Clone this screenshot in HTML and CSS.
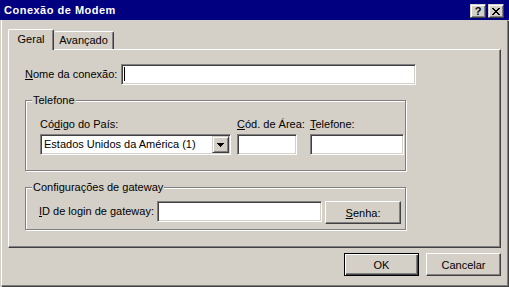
FILE: index.html
```html
<!DOCTYPE html>
<html lang="pt-BR">
<head>
<meta charset="UTF-8">
<title>Conexão de Modem</title>
<link rel="stylesheet" href="styles.css">
</head>
<body>
<div class="titlebar">
  <span class="title">Conexão de Modem</span>
  <div class="caption-btns">
    <span class="cap-btn help">?</span>
    <span class="cap-btn close">
      <svg width="8" height="7" viewBox="0 0 8 7"><path d="M0 0h2v1H0zM6 0h2v1H6zM1 1h2v1H1zM5 1h2v1H5zM2 2h4v1H2zM3 3h2v1H3zM2 4h4v1H2zM1 5h2v1H1zM5 5h2v1H5zM0 6h2v1H0zM6 6h2v1H6z" fill="#000"/></svg>
    </span>
  </div>
</div>
<div class="frame">
  <div class="tabs">
    <div class="tab active">Geral</div>
    <div class="tab">Avançado</div>
  </div>
  <div class="panel">
    <div class="name-row">
      <label class="name-label"><u>N</u>ome da conexão:</label>
      <div class="edit name-edit"><span class="caret"></span></div>
    </div>

    <fieldset class="group phone-group">
      <legend>Telefone</legend>
      <div class="phone-cols">
        <div class="col">
          <label>Có<u>d</u>igo do País:</label>
          <div class="combo country">
            <span class="combo-text">Estados Unidos da América (1)</span>
            <span class="combo-btn">
              <svg width="7" height="4" viewBox="0 0 7 4"><path d="M0 0h7v1H0zM1 1h5v1H1zM2 2h3v1H2zM3 3h1v1H3z" fill="#000"/></svg>
            </span>
          </div>
        </div>
        <div class="col">
          <label><u>C</u>ód. de Área:</label>
          <div class="edit area-edit"></div>
        </div>
        <div class="col">
          <label><u>T</u>elefone:</label>
          <div class="edit phone-edit"></div>
        </div>
      </div>
    </fieldset>

    <fieldset class="group gateway-group">
      <legend>Configurações de gateway</legend>
      <div class="gateway-row">
        <label class="gateway-label"><u>I</u>D de login de gateway:</label>
        <div class="edit gateway-edit"></div>
        <button class="btn senha"><u>S</u>enha:</button>
      </div>
    </fieldset>
  </div>
  <div class="actions">
    <button class="btn default">OK</button>
    <button class="btn">Cancelar</button>
  </div>
</div>
</body>
</html>
```

FILE: styles.css
```css
  body {
    margin: 0;
    width: 509px;
    height: 287px;
    overflow: hidden;
    background-color: #d4d0c8;
    font-family: "Liberation Sans", Arial, sans-serif;
    font-size: 11px;
    color: #000;
  }

  /* title bar */
  .titlebar {
    height: 20px;
    background-color: #000080;
    display: flex;
    align-items: flex-start;
  }
  .title {
    margin: 4px 0 0 4px;
    line-height: 13px;
    color: #fff;
    font-weight: bold;
    letter-spacing: 0.5px;
  }
  .caption-btns {
    margin: 4px 5px 0 auto;
    display: flex;
    gap: 2px;
  }
  .cap-btn {
    width: 16px;
    height: 14px;
    box-sizing: border-box;
    background-color: #d4d0c8;
    border: 1px solid;
    border-color: #d4d0c8 #404040 #404040 #d4d0c8;
    box-shadow: inset 1px 1px #fff, inset -1px -1px #808080;
    display: flex;
    align-items: center;
    justify-content: center;
  }
  .help {
    font-weight: bold;
    font-size: 11px;
    line-height: 12px;
  }

  /* window frame */
  .frame {
    margin-left: 1px;
    width: 507px;
    height: 266px;
    box-sizing: border-box;
    padding: 9px 6px 0 6px;
    border-left: 1px solid #fff;
    border-right: 1px solid #808080;
    border-bottom: 1px solid #808080;
    box-shadow: 1px 1px 0 #404040;
  }

  /* tabs */
  .tabs {
    display: flex;
    align-items: flex-end;
  }
  .tab {
    height: 18px;
    width: 60px;
    box-sizing: border-box;
    line-height: 17px;
    text-align: center;
    border-top: 1px solid #fff;
    border-right: 1px solid #404040;
    border-radius: 2px 2px 0 0;
    box-shadow: inset -1px 0 #808080;
  }
  .tab.active {
    position: relative;
    z-index: 1;
    width: 46px;
    height: 21px;
    line-height: 18px;
    margin-bottom: -1px;
    background-color: #d4d0c8;
    border-left: 1px solid #fff;
  }

  .panel {
    height: 199px;
    box-sizing: border-box;
    border: 1px solid;
    border-color: #fff #404040 #404040 #fff;
    box-shadow: inset -1px -1px #808080;
    padding: 14px 0 0 16px;
  }

  label {
    white-space: nowrap;
  }

  /* controls */
  .edit {
    height: 21px;
    box-sizing: border-box;
    background-color: #fff;
    border: 1px solid;
    border-color: #808080 #fff #fff #808080;
    box-shadow: inset 1px 1px #404040, inset -1px -1px #d4d0c8;
  }
  .btn {
    height: 23px;
    width: 75px;
    box-sizing: border-box;
    padding: 0;
    font: inherit;
    color: #000;
    background-color: #d4d0c8;
    border: 1px solid;
    border-color: #fff #404040 #404040 #fff;
    box-shadow: inset -1px -1px #808080;
  }
  .btn.default {
    border-color: #000;
    box-shadow: inset 1px 1px #fff, inset -1px -1px #404040, inset -2px -2px #808080;
  }

  .name-row {
    display: flex;
  }
  .name-label {
    width: 96px;
    line-height: 21px;
  }
  .name-edit {
    width: 295px;
    padding: 1px 0 0 1px;
    display: flex;
    align-items: flex-start;
  }
  .caret {
    margin: 1px 0 0 1px;
    width: 1px;
    height: 14px;
    background-color: #000;
  }

  /* group boxes */
  .group {
    margin: 9px 0 0 0;
    padding: 0;
    width: 381px;
    box-sizing: border-box;
    border: 1px solid #808080;
    box-shadow: inset 1px 1px #fff, 1px 1px 0 #fff;
  }
  .group legend {
    margin-left: 6px;
    padding: 0 1px;
    line-height: 13px;
    background-color: #d4d0c8;
  }
  .gateway-group {
    margin-top: 10px;
  }

  .phone-cols {
    display: flex;
    padding: 11px 0 15px 14px;
  }
  .col {
    width: 60px;
    display: flex;
    flex-direction: column;
    gap: 3px;
  }
  .col:first-child {
    width: 191px;
  }
  .col label {
    line-height: 13px;
  }
  .col + .col {
    margin-left: 6px;
  }
  .col:last-child {
    width: 94px;
    margin-left: 13px;
  }

  .combo {
    width: 191px;
    height: 21px;
    box-sizing: border-box;
    display: flex;
    background-color: #fff;
    border: 1px solid;
    border-color: #808080 #fff #fff #808080;
    box-shadow: inset 1px 1px #404040, inset -1px -1px #d4d0c8;
    padding: 1px;
  }
  .combo-text {
    flex: 1;
    padding-left: 2px;
    line-height: 17px;
  }
  .combo-btn {
    width: 17px;
    box-sizing: border-box;
    background-color: #d4d0c8;
    border: 1px solid;
    border-color: #d4d0c8 #404040 #404040 #d4d0c8;
    box-shadow: inset 1px 1px #fff, inset -1px -1px #808080;
    display: flex;
    align-items: center;
    justify-content: center;
  }
  .area-edit {
    width: 60px;
  }
  .phone-edit {
    width: 94px;
  }

  .gateway-row {
    display: flex;
    align-items: flex-start;
    padding: 7px 0 5px 13px;
  }
  .gateway-label {
    width: 118px;
    line-height: 21px;
  }
  .gateway-edit {
    width: 165px;
  }
  .senha {
    margin-left: 3px;
    width: 76px;
  }

  .actions {
    margin-top: 5px;
    display: flex;
    justify-content: flex-end;
    gap: 7px;
  }
```
